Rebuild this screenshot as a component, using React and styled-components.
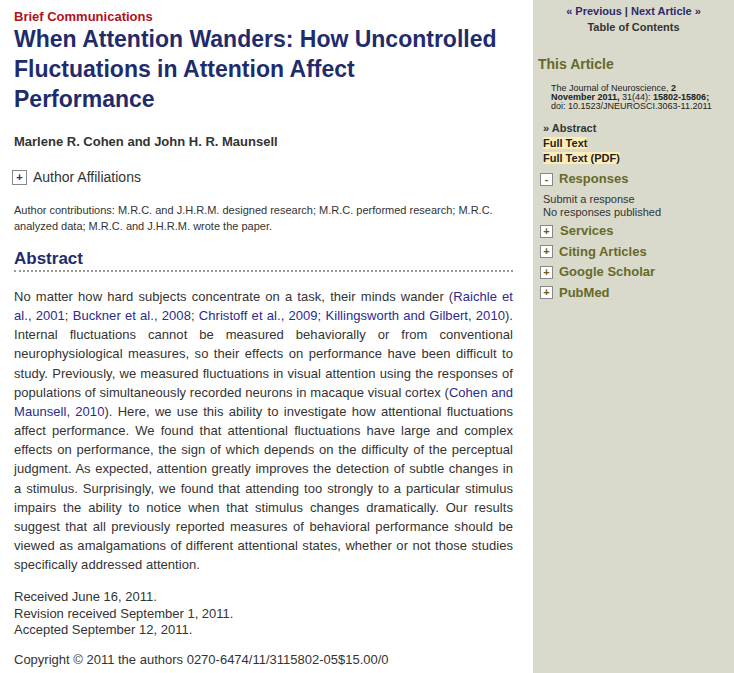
import React from "react";
import styled, { createGlobalStyle } from "styled-components";

const Global = createGlobalStyle`
  html, body { margin: 0; padding: 0; background: #fff; }
  body { font-family: Arial, "Liberation Sans", sans-serif; color: #333; }
`;

const Page = styled.div`
  display: flex;
  width: 734px;
  min-height: 673px;
  overflow: hidden;
`;

const Main = styled.main`
  width: 499px;
  flex: none;
  padding: 9px 20px 0 14px;
`;

const Kicker = styled.div`
  color: #b0121b;
  font-size: 13px;
  font-weight: bold;
  line-height: 15px;
`;

const Title = styled.h1`
  margin: 0;
  max-width: 486px;
  color: #1f2c6c;
  font-size: 23px;
  line-height: 30px;
  font-weight: bold;
`;

const Authors = styled.div`
  margin-top: 20px;
  font-size: 13px;
  font-weight: bold;
  line-height: 16px;
  color: #333;
`;

const Toggle = styled.div`
  display: flex;
  align-items: center;
  gap: ${(p) => p.$gap || 6}px;
  margin-top: ${(p) => p.$mt || 0}px;
  margin-left: ${(p) => p.$ml || 0}px;
  font-size: ${(p) => p.$size || 13}px;
  line-height: ${(p) => p.$lh || 18}px;
  font-weight: ${(p) => (p.$bold ? "bold" : "normal")};
  color: ${(p) => p.$color || "#333"};
`;

const Box = styled.span`
  box-sizing: border-box;
  display: inline-flex;
  align-items: center;
  justify-content: center;
  width: ${(p) => p.$w || 13}px;
  height: ${(p) => p.$h || 13}px;
  border: 1px solid #888;
  background: #fff;
  color: ${(p) => p.$color || "#6b5a10"};
  font-size: 11px;
  font-weight: bold;
  line-height: 1;
  margin-left: ${(p) => p.$ml || 0}px;
`;

const Contrib = styled.p`
  margin: 16px 0 0;
  font-size: 11px;
  line-height: 16px;
  color: #333;
`;

const SectionHead = styled.h2`
  margin: 15px 0 0;
  padding-bottom: 1px;
  font-size: 17px;
  line-height: 20px;
  color: #1f2c6c;
  font-weight: bold;
  border-bottom: 2px dotted #999;
`;

const Abstract = styled.p`
  margin: 15px 0 0;
  font-size: 13px;
  line-height: 19.15px;
  letter-spacing: 0.05px;
  text-align: justify;
  color: #333;
`;

const Ref = styled.a`
  color: #2b2b8f;
  text-decoration: none;
`;

const Dates = styled.div`
  margin-top: ${(p) => p.$mt}px;
  font-size: 13px;
  line-height: 16.5px;
  color: #333;
`;

const Side = styled.aside`
  flex: 1;
  background: #d9dacb;
  padding: 3px 0 0 0;
  min-height: 673px;
`;

const Nav = styled.div`
  text-align: center;
  font-size: 11px;
  line-height: 16px;
  font-weight: bold;
  color: #333;
`;

const NavLink = styled.span`
  color: ${(p) => (p.$dark ? "#333" : "#2b2b6b")};
`;

const SideHead = styled.div`
  margin: 20px 0 0 5px;
  font-size: 14px;
  font-weight: bold;
  line-height: 18px;
  color: #66692a;
`;

const Cite = styled.div`
  margin: 11px 0 0 18px;
  font-size: 9px;
  line-height: 9px;
  color: #222;
`;

const MenuList = styled.div`
  margin: 10px 0 0 10px;
  font-size: 11px;
  line-height: 15px;
  font-weight: bold;
  color: #333;
`;

const Hi = styled.span`
  background: #fdecb6;
  color: #222;
`;

const Sub = styled.div`
  margin: 6px 0 0 10px;
  font-size: 11px;
  line-height: 13px;
  color: #333;
`;

const sideLink = { $size: 13, $bold: true, $color: "#66692a", $lh: 16, $ml: 7 };

export default function App() {
  return (
    <>
      <Global />
      <Page>
        <Main>
          <Kicker>Brief Communications</Kicker>
          <Title>
            When Attention Wanders: How Uncontrolled Fluctuations in Attention
            Affect Performance
          </Title>
          <Authors>Marlene R. Cohen and John H. R. Maunsell</Authors>
          <Toggle $mt={18} $size={14} $lh={18} $gap={6}>
            <Box $w={15} $h={15} $ml={-2} $color="#2b2b9f">+</Box>
            Author Affiliations
          </Toggle>
          <Contrib>
            Author contributions: M.R.C. and J.H.R.M. designed research; M.R.C.
            performed research; M.R.C. analyzed data; M.R.C. and J.H.R.M. wrote
            the paper.
          </Contrib>
          <SectionHead>Abstract</SectionHead>
          <Abstract>
            No matter how hard subjects concentrate on a task, their minds wander
            (<Ref>Raichle et al., 2001</Ref>; <Ref>Buckner et al., 2008</Ref>;{" "}
            <Ref>Christoff et al., 2009</Ref>;{" "}
            <Ref>Killingsworth and Gilbert, 2010</Ref>). Internal fluctuations
            cannot be measured behaviorally or from conventional
            neurophysiological measures, so their effects on performance have
            been difficult to study. Previously, we measured fluctuations in
            visual attention using the responses of populations of simultaneously
            recorded neurons in macaque visual cortex (
            <Ref>Cohen and Maunsell, 2010</Ref>). Here, we use this ability to
            investigate how attentional fluctuations affect performance. We found
            that attentional fluctuations have large and complex effects on
            performance, the sign of which depends on the difficulty of the
            perceptual judgment. As expected, attention greatly improves the
            detection of subtle changes in a stimulus. Surprisingly, we found that
            attending too strongly to a particular stimulus impairs the ability
            to notice when that stimulus changes dramatically. Our results suggest
            that all previously reported measures of behavioral performance should
            be viewed as amalgamations of different attentional states, whether or
            not those studies specifically addressed attention.
          </Abstract>
          <Dates $mt={15}>
            Received June 16, 2011.
            <br />
            Revision received September 1, 2011.
            <br />
            Accepted September 12, 2011.
          </Dates>
          <Dates $mt={13}>
            Copyright © 2011 the authors 0270-6474/11/3115802-05$15.00/0
          </Dates>
        </Main>
        <Side>
          <Nav>
            <NavLink>« Previous</NavLink> | <NavLink>Next Article »</NavLink>
            <br />
            <NavLink $dark>Table of Contents</NavLink>
          </Nav>
          <SideHead>This Article</SideHead>
          <Cite>
            The Journal of Neuroscience, <b>2</b>
            <br />
            <b>November 2011,</b> 31(44): <b>15802-15806;</b>
            <br />
            doi: 10.1523/JNEUROSCI.3063-11.2011
          </Cite>
          <MenuList>
            » Abstract
            <br />
            <Hi>Full Text</Hi>
            <br />
            <Hi>Full Text (PDF)</Hi>
          </MenuList>
          <Toggle {...sideLink} $mt={5} $gap={6}>
            <Box>-</Box>
            Responses
          </Toggle>
          <Sub>
            Submit a response
            <br />
            No responses published
          </Sub>
          <Toggle {...sideLink} $mt={4} $gap={7}>
            <Box>+</Box>
            Services
          </Toggle>
          <Toggle {...sideLink} $mt={4.5} $gap={6}>
            <Box>+</Box>
            Citing Articles
          </Toggle>
          <Toggle {...sideLink} $mt={4.5} $gap={6}>
            <Box>+</Box>
            Google Scholar
          </Toggle>
          <Toggle {...sideLink} $mt={4.5} $gap={6}>
            <Box>+</Box>
            PubMed
          </Toggle>
        </Side>
      </Page>
    </>
  );
}
